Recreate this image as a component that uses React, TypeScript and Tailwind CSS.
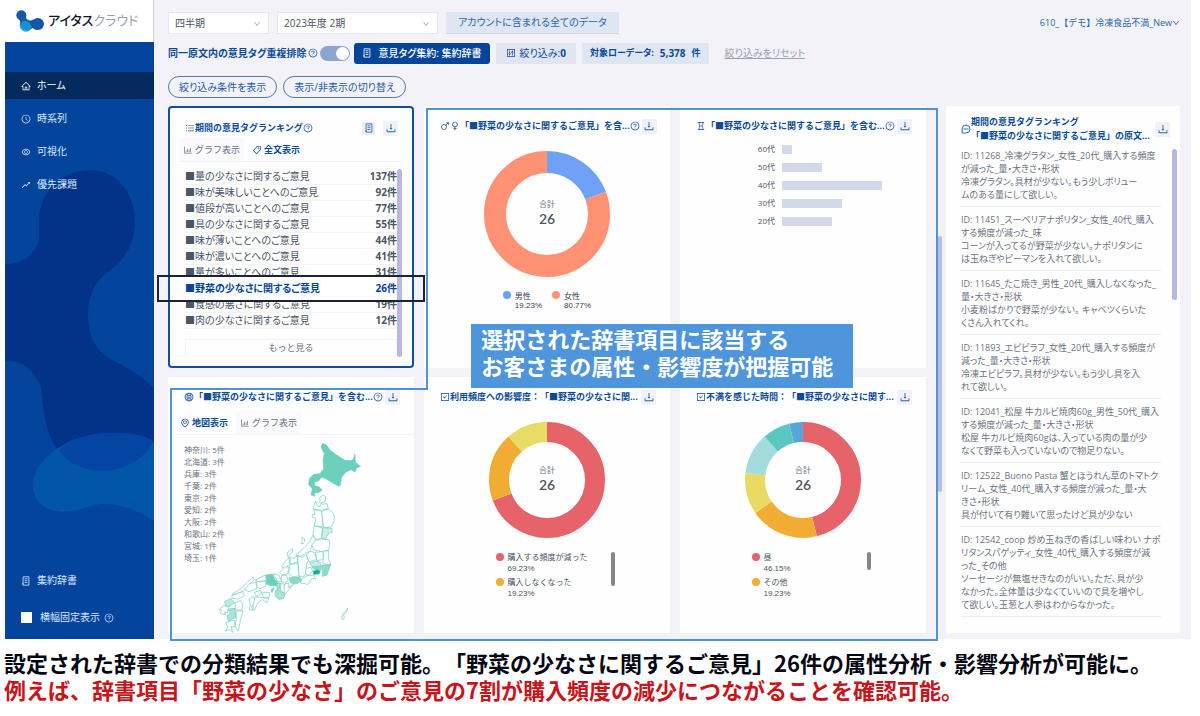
import React, { useState } from 'react';
import clsx from 'clsx';
import {
    AiOutlineBarChart,
    AiOutlineCheckSquare,
    AiOutlineClockCircle,
    AiOutlineControl,
    AiOutlineDown,
    AiOutlineDownload,
    AiOutlineEnvironment,
    AiOutlineEye,
    AiOutlineGlobal,
    AiOutlineHome,
    AiOutlineHourglass,
    AiOutlineMan,
    AiOutlineQuestionCircle,
    AiOutlineRise,
    AiOutlineTag,
    AiOutlineUnorderedList,
    AiOutlineWoman,
} from 'react-icons/ai';

interface Slice {
    label: string;
    value: number;
    color: string;
}

const ranking = [
    { label: '■量の少なさに関するご意見', count: 137 },
    { label: '■味が美味しいことへのご意見', count: 92 },
    { label: '■値段が高いことへのご意見', count: 77 },
    { label: '■具の少なさに関するご意見', count: 55 },
    { label: '■味が薄いことへのご意見', count: 44 },
    { label: '■味が濃いことへのご意見', count: 41 },
    { label: '■量が多いことへのご意見', count: 31 },
    { label: '■野菜の少なさに関するご意見', count: 26 },
    { label: '■食感の悪さに関するご意見', count: 19 },
    { label: '■肉の少なさに関するご意見', count: 12 },
];

const gender: Slice[] = [
    { label: '男性', value: 19.23, color: '#6ea1f7' },
    { label: '女性', value: 80.77, color: '#ff9275' },
];

const frequency: Slice[] = [
    { label: '購入する頻度が減った', value: 69.23, color: '#e66369' },
    { label: '購入しなくなった', value: 19.23, color: '#f0ac33' },
    { label: '変わらない', value: 11.54, color: '#e9dc64' },
];

const timing: Slice[] = [
    { label: '昼', value: 46.15, color: '#e66369' },
    { label: 'その他', value: 19.23, color: '#f0ac33' },
    { label: '夜', value: 11.54, color: '#e9da64' },
    { label: '夕方', value: 11.54, color: '#a3dcdb' },
    { label: '朝', value: 7.69, color: '#5ac8c0' },
    { label: '深夜', value: 3.85, color: '#58a5d8' },
];

const ages = [
    { label: '60代', value: 1 },
    { label: '50代', value: 4 },
    { label: '40代', value: 10 },
    { label: '30代', value: 6 },
    { label: '20代', value: 5 },
];

const prefectures = [
    ['神奈川', 5],
    ['北海道', 3],
    ['兵庫', 3],
    ['千葉', 2],
    ['東京', 2],
    ['愛知', 2],
    ['大阪', 2],
    ['和歌山', 2],
    ['宮城', 1],
    ['埼玉', 1],
];

const reviews = [
    'ID: 11268_冷凍グラタン_女性_20代_購入する頻度\nが減った_量・大きさ・形状\n冷凍グラタン。具材が少ない。もう少しボリュー\nムのある量にして欲しい。',
    'ID: 11451_スーペリアナポリタン_女性_40代_購入\nする頻度が減った_味\nコーンが入ってるが野菜が少ない。ナポリタンに\nは玉ねぎやピーマンを入れて欲しい。',
    'ID: 11645_たこ焼き_男性_20代_購入しなくなった_\n量・大きさ・形状\n小麦粉ばかりで野菜が少ない。 キャベツくらいた\nくさん入れてくれ。',
    'ID: 11893_エビピラフ_女性_20代_購入する頻度が\n減った_量・大きさ・形状\n冷凍エビピラフ。具材が少ない。もう少し具を入\nれて欲しい。',
    'ID: 12041_松屋 牛カルビ焼肉60g_男性_50代_購入\nする頻度が減った_量・大きさ・形状\n松屋 牛カルビ焼肉60gは、入っている肉の量が少\nなくて野菜も入っていないので物足りない。',
    'ID: 12522_Buono Pasta 蟹とほうれん草のトマトク\nリーム_女性_40代_購入する頻度が減った_量・大\nきさ・形状\n具が付いて有り難いて思ったけど具が少ない',
    'ID: 12542_coop 炒め玉ねぎの香ばしい味わい ナポ\nリタンスパゲッティ_女性_40代_購入する頻度が減\nった_その他\nソーセージが無塩せきなのがいい。ただ、具が少\nなかった。全体量は少なくていいので具を増やし\nて欲しい。玉葱と人参はわからなかった。',
];

const navItems = [
    { label: 'ホーム', icon: AiOutlineHome, active: true },
    { label: '時系列', icon: AiOutlineClockCircle },
    { label: '可視化', icon: AiOutlineEye },
    { label: '優先課題', icon: AiOutlineRise },
];

// Prefecture outlines, north to south
const mapShapes: { d: string; fill?: string }[] = [
    { fill: '#6dd0bd', d: 'M505 189L515 193 530 212 548 225 572 240 590 241 597 236 602 222 603 245 618 258 606 264 602 275 590 268 575 275 562 290 558 315 553 318 530 305 512 294 500 291 492 302 480 304 482 316 495 320 503 330 490 338 482 336 480 348 470 343 474 325 463 312 465 295 478 282 497 280 508 265 506 240 510 220 500 200Z' },
    { d: 'M484 362L490 378 498 378 496 352 506 345 514 349 512 364 500 368 504 372 518 370 522 384 502 390 476 386 480 372Z' },
    { d: 'M478 388L502 392 506 440 480 436 484 414 474 410 474 402 482 402Z' },
    { d: 'M502 392L522 386 534 396 541 410 538 428 530 440 508 442Z' },
    { d: 'M480 438L504 442 502 474 484 478 476 462Z' },
    { fill: '#cdeee8', d: 'M506 442L532 444 534 456 522 460 512 478 502 472Z' },
    { d: 'M484 480L502 476 524 478 526 496 522 510 500 514 478 508 472 492Z' },
    { d: 'M476 464L484 480 472 494 468 512 454 518 440 528 424 524 450 502 460 490 468 480Z' },
    { d: 'M442 472L452 476 448 490 440 490 444 482Z' },
    { d: 'M398 518L414 504 416 512 404 526 406 550 392 566 382 560 394 542 402 534Z' },
    { d: 'M406 532L416 534 430 526 430 546 408 550Z' },
    { d: 'M430 528L442 530 456 524 462 540 456 552 456 576 446 590 434 588 432 556Z' },
    { d: 'M456 522L470 512 482 518 486 538 464 544Z' },
    { d: 'M484 516L506 514 508 536 488 542Z' },
    { d: 'M508 512L524 512 522 536 530 554 506 550Z' },
    { fill: '#cdeee8', d: 'M466 548L486 542 498 546 500 558 472 558Z' },
    { fill: '#8fdccd', d: 'M472 560L500 558 500 568 484 570Z' },
    { fill: '#12ab90', d: 'M476 572L490 568 498 572 496 580 478 584Z' },
    { fill: '#92dccf', d: 'M502 554L528 554 522 572 518 584 504 588 504 574Z' },
    { d: 'M454 566L468 560 476 572 462 584 454 580Z' },
    { d: 'M440 598L458 586 478 584 484 596 474 594 460 612 438 608Z' },
    { d: 'M408 552L430 550 434 586 416 590 402 580Z' },
    { d: 'M376 576L390 560 404 560 400 580 384 584Z' },
    { fill: '#8cd8ca', d: 'M404 592L436 590 442 600 432 608 418 612 408 606Z' },
    { d: 'M382 586L396 584 402 600 390 608 380 600Z' },
    { d: 'M392 610L404 608 402 622 416 614 398 634 390 646 384 628Z' },
    { d: 'M356 580L374 584 382 604 370 604Z' },
    { fill: '#6dd0bd', d: 'M334 584L354 582 362 598 372 608 366 616 350 616 336 612Z' },
    { fill: '#aee4da', d: 'M368 610L378 608 376 626 368 628Z' },
    { d: 'M380 608L390 612 390 638 378 632Z' },
    { fill: '#a9e2d8', d: 'M364 630L378 630 392 642 388 654 374 658 362 646Z' },
    { fill: '#6dd0bd', d: 'M352 626L359 622 354 636 350 634Z' },
    { d: 'M302 600L320 590 334 584 336 600 314 604Z' },
    { d: 'M306 604L334 602 334 616 318 626 308 620Z' },
    { d: 'M274 612L304 606 308 624 284 634 272 628Z' },
    { d: 'M234 642L262 622 296 590 300 598 276 620 268 632 250 640Z' },
    { d: 'M232 646L264 634 270 646 252 656 234 654Z' },
    { d: 'M300 636L318 630 322 640 306 648Z' },
    { d: 'M322 636L346 636 344 652 326 650Z' },
    { d: 'M284 656L298 648 302 664 292 678 296 690 284 688 288 674Z' },
    { d: 'M302 650L326 652 344 654 338 668 324 658 310 668 300 690 296 678Z' },
    { fill: '#bfe9e2', d: 'M210 664L230 654 240 668 226 678 214 676Z' },
    { d: 'M242 668L258 660 266 674 262 690 244 688Z' },
    { d: 'M208 676L222 680 220 698 210 694 214 704 198 698 202 690 194 688Z' },
    { fill: '#a9e2d8', d: 'M222 686L242 684 244 712 222 722 218 706 228 700Z' },
    { d: 'M246 692L266 692 258 722 252 752 242 738 246 714Z' },
    { d: 'M214 726L240 720 242 740 230 738 236 756 226 748 214 752 220 740Z' },
    { d: 'M580 684L576 696 568 704 570 714 564 718 562 708 572 694Z' },
];

const DocIcon = ({ className }: { className?: string }) => (
    <svg viewBox="0 0 12 12" fill="none" stroke="currentColor" className={className} aria-hidden="true">
        <path d="M2.5 1h7v10h-7zM4.3 3.4h3.4M4.3 5.6h3.4M4.3 7.8h3.4M1.2 9.5h2" />
    </svg>
);

const CommentIcon = ({ className }: { className?: string }) => (
    <svg viewBox="0 0 12 12" fill="none" stroke="currentColor" className={className} aria-hidden="true">
        <path d="M1.4 10.8V6a4.7 4.7 0 1 1 4.6 4.8zM3 6h6" />
    </svg>
);

const Logo = () => (
    <div className="flex h-[42px] items-center gap-1 border-r border-slate-300 bg-white pl-[11px]">
        <svg viewBox="0 0 84 66" className="h-[22px] w-7 shrink-0" aria-hidden="true">
            <circle cx="30" cy="46" r="19" fill="#26a6d8" />
            <path d="M4 24C12 30 14 34 13 42C22 58 36 62 50 54C54 58 60 60 66 60L64 26C52 26 48 32 40 32C32 32 30 26 30 14Z" fill="#1658a5" />
            <path d="M20 34C34 30 44 38 48 54C38 64 20 62 13 46Z" fill="#1e8fcc" />
            <circle cx="16" cy="16" r="15" fill="#1658a5" />
            <circle cx="66" cy="42" r="18" fill="#1658a5" />
        </svg>
        <span className="text-[13px] font-medium whitespace-nowrap text-gray-900">
            アイタス<span className="font-normal text-gray-400">クラウド</span>
        </span>
    </div>
);

const Sidebar = () => (
    <aside className="flex w-[149px] shrink-0 flex-col">
        <Logo />
        <div className="relative flex flex-1 flex-col overflow-hidden bg-[#03459d] pt-[30px] text-blue-100">
            <svg viewBox="0 0 149 596" preserveAspectRatio="none" className="absolute inset-0 size-full" aria-hidden="true">
                <path d="M34 176C36 146 58 128 86 128C112 128 130 152 130 178C130 204 118 218 106 227C92 236 83 252 83 270C83 300 95 312 112 320C128 328 140 336 149 346V400L54 408C40 395 38 362 36 345C30 330 20 318 0 318V222C20 222 33 208 34 196Z" fill="#023389" />
                <path d="M28 442C28 418 60 394 95 391C120 389 138 392 149 399V478C128 464 104 458 86 463C60 474 28 470 28 442Z" fill="#0256a8" />
                <path d="M54 408C76 386 130 386 149 399C128 434 76 438 54 408Z" fill="#0445a3" />
            </svg>
            <nav className="relative flex flex-1 flex-col gap-1.5 text-[10px]">
                {navItems.map(({ label, icon: Icon, active }) => (
                    <a
                        key={label}
                        href="#"
                        className={clsx('flex h-[27px] items-center gap-1.5 pl-4', active && 'bg-[#04295c] text-white')}
                    >
                        <Icon className="size-2.5" />
                        {label}
                    </a>
                ))}
                <a href="#" className="mt-auto mb-1 flex h-[27px] items-center gap-1.5 pl-4">
                    <DocIcon className="size-2.5" />
                    集約辞書
                </a>
                <div className="mb-2 flex h-[27px] items-center pl-4">
                    <input id="fixed-width" type="checkbox" className="size-[11px] appearance-none bg-white checked:bg-blue-300" />
                    <label htmlFor="fixed-width" className="pr-1 pl-2">横幅固定表示</label>
                    <AiOutlineQuestionCircle className="size-2.5" />
                </div>
            </nav>
        </div>
    </aside>
);

const Select = ({ label, options, className }: { label: string; options: string[]; className: string }) => (
    <div className={clsx('relative', className)}>
        <select
            aria-label={label}
            className="h-[22px] w-full appearance-none border border-gray-200 bg-white pr-5 pl-1.5 text-[10px] text-gray-600"
        >
            {options.map((option) => (
                <option key={option}>{option}</option>
            ))}
        </select>
        <AiOutlineDown className="pointer-events-none absolute top-2 right-2 size-2 text-gray-400" />
    </div>
);

const Toolbar = () => {
    const [dedupe, setDedupe] = useState(true);

    return (
        <header className="text-[10px] whitespace-nowrap">
            <div className="flex items-center gap-2">
                <Select label="期間の単位" options={['四半期', '月', '年']} className="w-[101px]" />
                <Select label="期間" options={['2023年度 2期', '2023年度 1期']} className="w-[161px]" />
                <button className="h-[22px] border-b border-gray-300 bg-[#dfe5f1] px-3 text-[#2a66a8]">
                    アカウントに含まれる全てのデータ
                </button>
                <button className="ml-auto flex items-center text-[9px] text-[#2a66a8] [font-feature-settings:normal]">
                    610_【デモ】冷凍食品不満_New
                    <AiOutlineDown className="size-2" />
                </button>
            </div>

            <div className="mt-2 flex h-[22px] items-center text-[#0b4b97]">
                <label htmlFor="dedupe" className="font-bold">同一原文内の意見タグ重複排除</label>
                <AiOutlineQuestionCircle className="mx-0.5 size-2.5" />
                <input
                    id="dedupe"
                    type="checkbox"
                    role="switch"
                    checked={dedupe}
                    onChange={(e) => setDedupe(e.target.checked)}
                    className="flex h-[15px] w-[30px] appearance-none items-center rounded-full bg-gray-400 px-px before:size-[13px] before:rounded-full before:bg-white checked:justify-end checked:bg-[#8ba5cf]"
                />
                <button className="ml-1 flex h-[21px] items-center gap-1.5 rounded-[3px] bg-[#03459b] px-2 font-medium text-white">
                    <DocIcon className="size-2.5" />
                    意見タグ集約: 集約辞書
                </button>
                <button className="ml-1.5 flex h-[21px] items-center gap-1 bg-[#e0e5f0] px-2.5">
                    <AiOutlineControl className="size-2.5" />
                    <span>絞り込み:<b>0</b></span>
                </button>
                <p className="ml-1.5 flex h-[21px] items-center gap-1.5 bg-[#e0e6f1] px-2 font-bold">
                    <span className="text-[9px]">対象ローデータ:</span>
                    <span>5,378</span>
                    <span className="text-[9px]">件</span>
                </p>
                <a href="#" className="ml-4 text-gray-400 underline">絞り込みをリセット</a>
            </div>

            <div className="mt-3 flex gap-1.5 text-[#1d5aa3]">
                <button className="h-[22px] rounded-full border border-[#4a7cb8] px-2.5">絞り込み条件を表示</button>
                <button className="h-[22px] rounded-full border border-[#4a7cb8] px-2.5">表示/非表示の切り替え</button>
            </div>
        </header>
    );
};

const DownloadButton = () => (
    <button aria-label="ダウンロード" className="flex size-[15px] shrink-0 items-center justify-center bg-[#f1f2f9] text-[#2a66a8]">
        <AiOutlineDownload className="size-3" />
    </button>
);

interface CardProps {
    icon: React.ReactNode;
    title: string;
    help?: boolean;
    children: React.ReactNode;
}

const Card = ({ icon, title, help, children }: CardProps) => (
    <section className="flex min-w-0 flex-col bg-[#fefeff] pt-2.5">
        <div className="flex h-5 items-center pr-3.5 pl-4 text-[#0b4b97]">
            {icon}
            <h2 className="text-[9px] font-bold whitespace-nowrap">{title}</h2>
            <span className="ml-auto flex items-center gap-0.5">
                {help && <AiOutlineQuestionCircle className="size-2.5 shrink-0" />}
                <DownloadButton />
            </span>
        </div>
        {children}
    </section>
);

const Donut = ({ slices, radius, thickness }: { slices: Slice[]; radius: number; thickness: number }) => {
    const size = radius * 2;
    let offset = 0;

    return (
        <svg width={size} height={size} viewBox={`0 0 ${size} ${size}`} className="mx-auto mt-[15px] shrink-0">
            {slices.map((slice) => {
                const start = offset;
                offset += slice.value;
                return (
                    <circle
                        key={slice.label}
                        cx={radius}
                        cy={radius}
                        r={radius - thickness / 2}
                        fill="none"
                        stroke={slice.color}
                        strokeWidth={thickness}
                        pathLength={100}
                        strokeDasharray={`${slice.value} ${100 - slice.value}`}
                        strokeDashoffset={-start}
                        transform={`rotate(-90 ${radius} ${radius})`}
                    />
                );
            })}
            <text x={radius} y={radius - 7} textAnchor="middle" className="fill-gray-500 text-[8px]">合計</text>
            <text x={radius} y={radius + 10} textAnchor="middle" className="fill-gray-600 font-[Lato] text-[14px] font-semibold">26</text>
        </svg>
    );
};

const ScrollLegend = ({ slices, thumb }: { slices: Slice[]; thumb: string }) => (
    <div className="mt-3 flex w-full justify-center pl-4 text-[8px] text-gray-600">
        <ul className="w-[115px]">
            {slices.slice(0, 2).map((slice) => (
                <li key={slice.label} className="flex gap-1">
                    <span className="mt-[3px] size-2 rounded-full" style={{ backgroundColor: slice.color }} />
                    <span>
                        <span className="block leading-[13px] whitespace-nowrap">{slice.label}</span>
                        <span className="block font-['Liberation_Sans'] leading-3">{slice.value}%</span>
                    </span>
                </li>
            ))}
        </ul>
        <span className={clsx('mt-0.5 w-1 rounded-full bg-[#85858c]', thumb)} />
    </div>
);

const Tab = ({ icon, label, active }: { icon: React.ReactNode; label: string; active?: boolean }) => (
    <button
        role="tab"
        aria-selected={!!active}
        className={clsx(
            'flex h-full items-center gap-0.5 px-1',
            active ? 'font-bold text-[#0b4b97]' : 'bg-[#faf9fc] text-gray-500'
        )}
    >
        {icon}
        {label}
    </button>
);

const RankingCard = () => (
    <section className="flex min-w-0 flex-col rounded-[4px] border-2 border-[#12509f] bg-[#fefeff] pt-2.5 pr-2.5 pl-[15px]">
        <div className="flex h-5 items-center text-[#0b4b97]">
            <AiOutlineUnorderedList className="size-2.5" />
            <h2 className="text-[9px] font-bold">期間の意見タグランキング</h2>
            <AiOutlineQuestionCircle className="size-2.5" />
            <span className="mr-1 ml-auto flex items-center gap-2">
                <button aria-label="辞書" className="flex size-[13px] items-center justify-center bg-[#e9edf6] text-[#2a66a8]">
                    <DocIcon className="size-2.5" />
                </button>
                <DownloadButton />
            </span>
        </div>
        <div role="tablist" className="-ml-1.5 flex h-6 gap-1 border-b border-gray-100 text-[9px]">
            <Tab icon={<AiOutlineBarChart className="size-2.5" />} label="グラフ表示" />
            <Tab icon={<AiOutlineTag className="size-2.5" />} label="全文表示" active />
        </div>
        <div className="mt-[7px] flex">
            <div className="flex-1">
                <ol className="text-[10px] text-gray-600 [font-feature-settings:'palt']">
                    {ranking.map((row) => {
                        const selected = row.count === 26;
                        return (
                            <li
                                key={row.label}
                                className={clsx(
                                    'flex h-4 items-center justify-between border-b border-gray-100',
                                    selected && 'relative z-10 text-[#03459b]'
                                )}
                            >
                                {selected && (
                                    <>
                                        <span className="absolute inset-x-0 -inset-y-1.5 -z-10 bg-white" />
                                        <span className="absolute -inset-x-7 -inset-y-1.5 border-2 border-[#1c2430]" />
                                    </>
                                )}
                                <span className={clsx(selected && 'font-bold')}>{row.label}</span>
                                <b>{row.count}件</b>
                            </li>
                        );
                    })}
                </ol>
                <button className="mt-2.5 h-4 w-full border-x border-t border-gray-100 text-[9px] text-gray-500">もっと見る</button>
            </div>
            <span className="w-[5px] rounded-full bg-[#b9b8e0]" />
        </div>
    </section>
);

const MapCard = () => (
    <Card icon={<AiOutlineGlobal className="size-2.5 shrink-0" />} title="「■野菜の少なさに関するご意見」を含む..." help>
        <div role="tablist" className="mt-1 ml-2 flex h-6 gap-1 border-b border-gray-100 text-[9px]">
            <Tab icon={<AiOutlineEnvironment className="size-2.5" />} label="地図表示" active />
            <Tab icon={<AiOutlineBarChart className="size-2.5" />} label="グラフ表示" />
        </div>
        <div className="grid pt-[7px] pl-4">
            <ul className="col-start-1 row-start-1 pt-0.5 text-[8px] leading-3 text-gray-500">
                {prefectures.map(([name, count]) => (
                    <li key={name}>{name}: {count}件</li>
                ))}
            </ul>
            <svg viewBox="185 185 441 573" className="col-start-1 row-start-1 ml-8 h-[191px] w-[147px]" aria-label="日本地図">
                {mapShapes.map((shape) => (
                    <path key={shape.d} d={shape.d} fill={shape.fill ?? '#fdfffe'} stroke="#6fcdbd" strokeWidth="2" strokeLinejoin="round" />
                ))}
            </svg>
        </div>
    </Card>
);

const ReviewPanel = () => (
    <section className="w-[234px] shrink-0 bg-[#fefeff] pt-[9px] pl-[15px]">
        <div className="flex items-center pr-2.5 text-[#0b4b97]">
            <CommentIcon className="size-2.5 shrink-0" />
            <h2 className="text-[9px] leading-[14px] font-bold whitespace-nowrap">
                期間の意見タグランキング
                <br />
                「■野菜の少なさに関するご意見」の原文...
            </h2>
            <span className="ml-auto"><DownloadButton /></span>
        </div>
        <div className="mt-1.5 flex justify-between pr-[3px]">
            <ul className="w-[200px] text-[9px] leading-[13px] text-gray-500 [font-feature-settings:'palt']">
                {reviews.map((text) => (
                    <li key={text} className="mb-1.5 border-b border-gray-200/70 pb-[5px] whitespace-pre">{text}</li>
                ))}
            </ul>
            <span className="h-[151px] w-[5px] rounded-full bg-[#b3b9e3]" />
        </div>
    </section>
);

export default function App() {
    return (
        <div className="min-h-screen bg-white pr-[9px] pl-[5px] font-['Open_Sans','Noto_Sans_CJK_JP',sans-serif] [text-spacing-trim:space-all]">
            <div className="flex">
                <div className="flex [font-feature-settings:'palt']">
                    <Sidebar />
                </div>

                <main className="min-w-0 flex-1 bg-[#f2f2f8] pt-3 pr-[11px] pb-1.5 pl-3.5">
                    <div className="[font-feature-settings:'palt']">
                        <Toolbar />
                    </div>

                    <div className="mt-2 flex gap-5">
                        <div className="relative grid min-w-0 flex-1 grid-cols-3 grid-rows-[262px_auto] gap-x-2.5 gap-y-[9px]">
                            <RankingCard />

                            <Card
                                icon={<span className="flex shrink-0"><AiOutlineMan className="size-2.5" /><AiOutlineWoman className="size-2.5" /></span>}
                                title="「■野菜の少なさに関するご意見」を含..."
                                help
                            >
                                <Donut slices={gender} radius={63} thickness={22} />
                                <ul className="mt-3.5 flex justify-center gap-2.5 text-[8px] leading-[10px] text-gray-700">
                                    {gender.map((slice) => (
                                        <li key={slice.label} className="flex gap-1">
                                            <span className="size-2 rounded-full" style={{ backgroundColor: slice.color }} />
                                            <span>
                                                {slice.label}
                                                <span className="block font-['Liberation_Sans']">{slice.value}%</span>
                                            </span>
                                        </li>
                                    ))}
                                </ul>
                            </Card>

                            <Card icon={<AiOutlineHourglass className="size-2.5 shrink-0" />} title="「■野菜の少なさに関するご意見」を含む..." help>
                                <ul className="mt-1 ml-[75px] text-[8px] text-gray-600">
                                    {ages.map((age) => (
                                        <li key={age.label} className="flex h-[18px] items-center">
                                            <span className="w-5 text-right">{age.label}</span>
                                            <span className="ml-[7px] h-[9px] bg-[#d2daea]" style={{ width: age.value * 10 }} />
                                        </li>
                                    ))}
                                </ul>
                            </Card>

                            <MapCard />

                            <Card icon={<AiOutlineCheckSquare className="size-2.5 shrink-0" />} title="利用頻度への影響度：「■野菜の少なさに関...">
                                <Donut slices={frequency} radius={58} thickness={20} />
                                <ScrollLegend slices={frequency} thumb="h-[34px]" />
                            </Card>

                            <Card icon={<AiOutlineCheckSquare className="size-2.5 shrink-0" />} title="不満を感じた時間：「■野菜の少なさに関す...">
                                <Donut slices={timing} radius={58} thickness={20} />
                                <ScrollLegend slices={timing} thumb="h-[18px]" />
                            </Card>

                            {/* Annotation frame around the drill-down cards */}
                            <span className="absolute top-[130px] -right-4 h-64 w-1 rounded-full bg-[#b4bfdc]" />
                            <div className="pointer-events-none absolute top-0.5 -right-3 left-[34%] h-[282px] border-2 border-b-0 border-[#5094d8]" />
                            <div className="pointer-events-none absolute top-[282px] left-0.5 w-[34%] border-t-2 border-[#5094d8]" />
                            <div className="pointer-events-none absolute top-[282px] -right-3 -bottom-2 left-0.5 border-2 border-t-0 border-[#5094d8]" />
                            <p className="absolute top-[218px] left-[40%] h-16 bg-[#4f95dc] pt-0.5 pr-5 pl-2.5 text-[22px] leading-[27px] font-bold whitespace-nowrap text-white">
                                選択された辞書項目に該当する
                                <br />
                                お客さまの属性・影響度が把握可能
                            </p>
                        </div>

                        <ReviewPanel />
                    </div>
                </main>
            </div>

            <footer className="-ml-px pt-2.5 font-['Noto_Sans_CJK_JP',sans-serif] text-[22px] leading-[27px] font-bold whitespace-nowrap text-gray-950">
                <p>設定された辞書での分類結果でも深掘可能。「野菜の少なさに関するご意見」26件の属性分析・影響分析が可能に。</p>
                <p className="text-[#c8141a]">例えば、辞書項目「野菜の少なさ」のご意見の7割が購入頻度の減少につながることを確認可能。</p>
            </footer>
        </div>
    );
}
